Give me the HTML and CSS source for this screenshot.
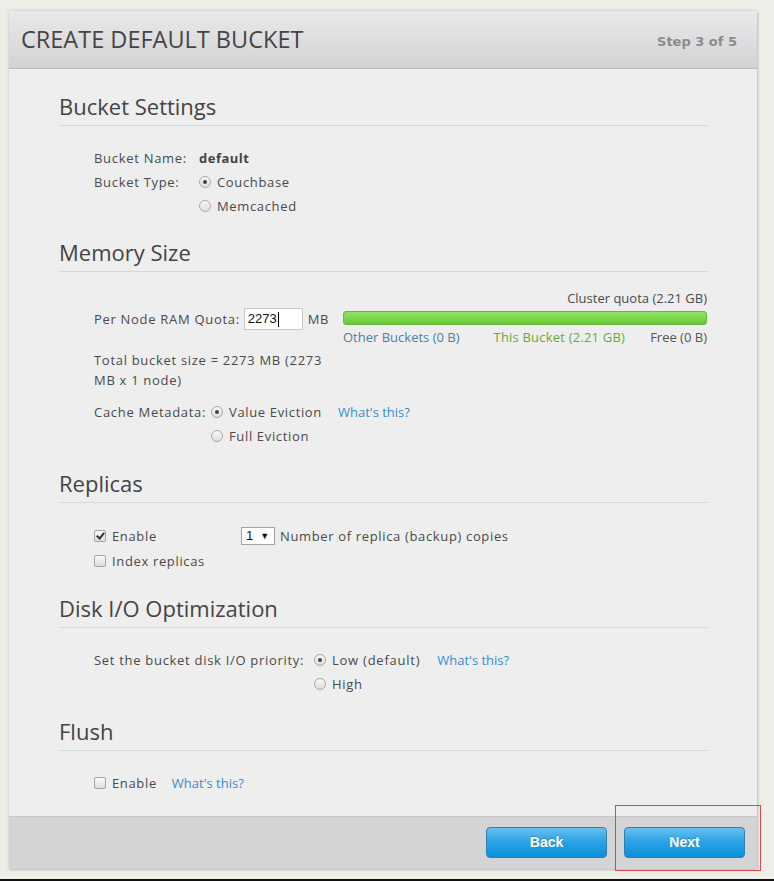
FILE: index.html
```html
<!DOCTYPE html>
<html>
<head>
<meta charset="utf-8">
<link rel="stylesheet" href="styles.css">
</head>
<body>
<div class="page">
  <div class="panel">
    <div class="panel-head">
      <h1 class="title">CREATE DEFAULT BUCKET</h1>
      <span class="step">Step 3 of 5</span>
    </div>
    <div class="panel-body">
      <section class="sec sec-first">
        <h2 class="sec-title">Bucket Settings</h2>
        <div class="rows rows-settings">
          <div class="row"><span class="lbl lbl-fixed">Bucket Name:</span><b class="val-bold">default</b></div>
          <div class="row"><span class="lbl lbl-fixed">Bucket Type:</span><span class="radio on"></span><span class="opt">Couchbase</span></div>
          <div class="row"><span class="lbl lbl-fixed"></span><span class="radio"></span><span class="opt">Memcached</span></div>
        </div>
      </section>

      <section class="sec sec-mem">
        <h2 class="sec-title">Memory Size</h2>
        <div class="quota-top">Cluster quota (2.21 GB)</div>
        <div class="quota-grid">
          <div class="quota-left">
            <div class="quota-row">
              <span class="lbl">Per Node RAM Quota:</span>
              <span class="textbox">2273<span class="caret"></span></span>
              <span class="unit">MB</span>
            </div>
            <div class="total">Total bucket size = 2273 MB (2273 MB x 1 node)</div>
          </div>
          <div class="quota-right">
            <div class="bar"></div>
            <div class="legend">
              <span class="lg-other">Other Buckets (0 B)</span>
              <span class="lg-this">This Bucket (2.21 GB)</span>
              <span class="lg-free">Free (0 B)</span>
            </div>
          </div>
        </div>
        <div class="rows rows-cache">
          <div class="row"><span class="lbl lbl-cache">Cache Metadata:</span><span class="radio on"></span><span class="opt opt-gap">Value Eviction</span><a class="link">What's this?</a></div>
          <div class="row"><span class="lbl lbl-cache"></span><span class="radio"></span><span class="opt">Full Eviction</span></div>
        </div>
      </section>

      <section class="sec">
        <h2 class="sec-title">Replicas</h2>
        <div class="rows rows-rep">
          <div class="row"><span class="check on"></span><span class="opt rep-enable">Enable</span><span class="select">1<span class="arrow">▼</span></span><span class="opt">Number of replica (backup) copies</span></div>
          <div class="row row-rep2"><span class="check"></span><span class="opt">Index replicas</span></div>
        </div>
      </section>

      <section class="sec">
        <h2 class="sec-title">Disk I/O Optimization</h2>
        <div class="rows rows-disk">
          <div class="row"><span class="lbl lbl-disk">Set the bucket disk I/O priority:</span><span class="radio on"></span><span class="opt opt-gap opt-low">Low (default)</span><a class="link">What's this?</a></div>
          <div class="row"><span class="lbl lbl-disk"></span><span class="radio"></span><span class="opt">High</span></div>
        </div>
      </section>

      <section class="sec">
        <h2 class="sec-title">Flush</h2>
        <div class="rows rows-flush">
          <div class="row"><span class="check"></span><span class="opt flush-enable">Enable</span><a class="link">What's this?</a></div>
        </div>
      </section>
    </div>
    <div class="panel-foot">
      <button class="btn">Back</button>
      <button class="btn">Next</button>
    </div>
    <div class="highlight"></div>
  </div>
</div>
<div class="bottom-line"></div>
</body>
</html>
```

FILE: styles.css
```css
html, body {
  margin: 0;
  padding: 0;
}
body {
  background: #efede7;
  width: 774px;
  height: 881px;
  overflow: hidden;
  position: relative;
  font-family: "Open Sans", "DejaVu Sans", sans-serif;
  font-size: 13px;
  color: #4a4a4a;
}
.page {
  padding: 11px 0 0 9px;
}
.panel {
  position: relative;
  width: 748px;
  height: 858px;
  background: #eeeeee;
  display: flex;
  flex-direction: column;
  box-shadow: 0 0 3px rgba(0,0,0,0.18), 1px 1px 2px rgba(0,0,0,0.12);
}
.panel-head {
  height: 57px;
  border-bottom: 1px solid #b9b9b9;
  background: linear-gradient(#e9e9eb, #d3d3d5);
  display: flex;
  align-items: center;
  justify-content: space-between;
  padding: 0 20px 0 12px;
}
.title {
  margin: 0;
  font-weight: normal;
  font-size: 23.5px;
  color: #454545;
  position: relative;
  top: -1px;
}
.step {
  font-family: "DejaVu Sans", Verdana, sans-serif;
  font-weight: bold;
  font-size: 13px;
  color: #8c8c8c;
  position: relative;
  top: 2px;
}
.panel-body {
  flex: 1;
  padding: 0 50px;
}
.sec-title {
  margin: 0;
  font-weight: normal;
  font-size: 22px;
  line-height: 24px;
  color: #444;
  padding-top: 4px;
  padding-bottom: 3px;
  border-bottom: 1px solid #d6d6d6;
}
.sec-title { padding-top: 0; padding-bottom: 7px; }
.sec { margin-top: 23px; }
.sec-first { margin-top: 25px; }
.sec-mem { margin-top: 22px; }
.rows { padding-left: 35px; }
.rows-settings { margin-top: 20px; }
.row {
  display: flex;
  align-items: center;
  height: 24px;
}
.lbl { color: #4a4a4a; letter-spacing: 0.7px; }
.opt { letter-spacing: 0.65px; }
.lbl-fixed { width: 105px; flex: none; }
.val-bold { font-weight: bold; color: #444; letter-spacing: 0.5px; }
.radio {
  width: 10px;
  height: 10px;
  border: 1px solid #a9a9a9;
  border-radius: 50%;
  background: linear-gradient(#f8f8f8, #dedede);
  margin-right: 6px;
  flex: none;
  position: relative;
}
.radio.on::after {
  content: "";
  position: absolute;
  left: 3px;
  top: 3px;
  width: 4px;
  height: 4px;
  border-radius: 50%;
  background: #444;
}
.check {
  width: 10px;
  height: 10px;
  border: 1px solid #a4a4a4;
  border-radius: 2px;
  background: linear-gradient(#fafafa, #dddddd);
  margin-right: 6px;
  flex: none;
  position: relative;
}
.check.on::after {
  content: "";
  position: absolute;
  left: 3px;
  top: 0px;
  width: 3px;
  height: 6px;
  border: solid #333;
  border-width: 0 2px 2px 0;
  transform: rotate(40deg);
}
.quota-top {
  margin-top: 16px;
  text-align: right;
  line-height: 20px;
  height: 20px;
}
.quota-grid {
  display: flex;
  padding-left: 35px;
}
.quota-left {
  width: 236px;
  flex: none;
}
.quota-row {
  display: flex;
  align-items: center;
  height: 22px;
}
.textbox {
  width: 54px;
  height: 20px;
  margin-left: 4px;
  border: 1px solid #c9c9c9;
  background: #fff;
  font-family: "Liberation Sans", Arial, sans-serif;
  font-size: 13px;
  color: #111;
  line-height: 20px;
  padding-left: 3px;
  box-sizing: content-box;
  display: flex;
  align-items: center;
}
.caret {
  display: inline-block;
  width: 1px;
  height: 15px;
  background: #000;
  margin-left: 1px;
}
.unit { margin-left: 5px; letter-spacing: 0.5px; }
.total {
  margin-top: 20px;
  line-height: 20px;
  width: 240px;
  letter-spacing: 0.7px;
}
.quota-right {
  flex: 1;
  margin-left: 13px;
}
.bar {
  margin-top: 3px;
  height: 12px;
  border: 1px solid #6bb83e;
  border-radius: 3px;
  background: linear-gradient(#96e066, #7bd94a 50%, #64c734);
}
.legend {
  margin-top: 2px;
  display: flex;
  line-height: 20px;
}
.lg-other { color: #4f7e9f; }
.lg-this { color: #6aa83b; margin-left: 34px; letter-spacing: 0.2px; }
.lg-free { color: #555; margin-left: auto; }
.rows-cache { margin-top: 10px; }
.lbl-cache { width: 117px; flex: none; }
.opt-gap { margin-right: 16px; }
.opt-low { margin-right: 17px; letter-spacing: 0.75px; }
.link { color: #3a8cc9; text-decoration: none; }
.rows-rep { margin-top: 21px; }
.row-rep2 { height: 25px; }
.rep-enable { width: 129px; flex: none; }
.select {
  width: 28px;
  height: 16px;
  border: 1px solid #a2a2a2;
  background: #fff;
  color: #111;
  font-family: "Liberation Sans", Arial, sans-serif;
  font-size: 13px;
  line-height: 16px;
  padding-left: 4px;
  margin-right: 5px;
  display: flex;
  align-items: center;
  box-sizing: content-box;
}
.arrow {
  font-size: 9px;
  margin-left: 7px;
}
.rows-disk { margin-top: 20px; }
.lbl-disk { width: 220px; flex: none; }
.rows-flush { margin-top: 20px; }
.flush-enable { margin-right: 15px; }
.panel-foot {
  height: 53px;
  border-top: 1px solid #c6c6c6;
  background: #d4d4d6;
  display: flex;
  justify-content: flex-end;
  align-items: flex-start;
  padding: 10px 12px 0 0;
  box-sizing: border-box;
  gap: 17px;
}
.btn {
  width: 121px;
  height: 31px;
  border: 1px solid #2d7fb4;
  border-radius: 4px;
  background: linear-gradient(#69c0f0, #2da3e6 45%, #0a8fd9);
  color: #fff;
  font-family: "Liberation Sans", Arial, sans-serif;
  font-weight: bold;
  font-size: 14px;
  line-height: 28px;
  text-shadow: 0 -1px 0 rgba(0,0,0,0.2);
  padding: 0 0 3px 0;
}
.highlight {
  position: absolute;
  left: 606px;
  top: 794px;
  width: 144px;
  height: 64px;
  border: 1px solid #d9484c;
}
.bottom-line {
  position: absolute;
  left: 0;
  bottom: 0;
  width: 774px;
  height: 2px;
  background: #111;
}
```
